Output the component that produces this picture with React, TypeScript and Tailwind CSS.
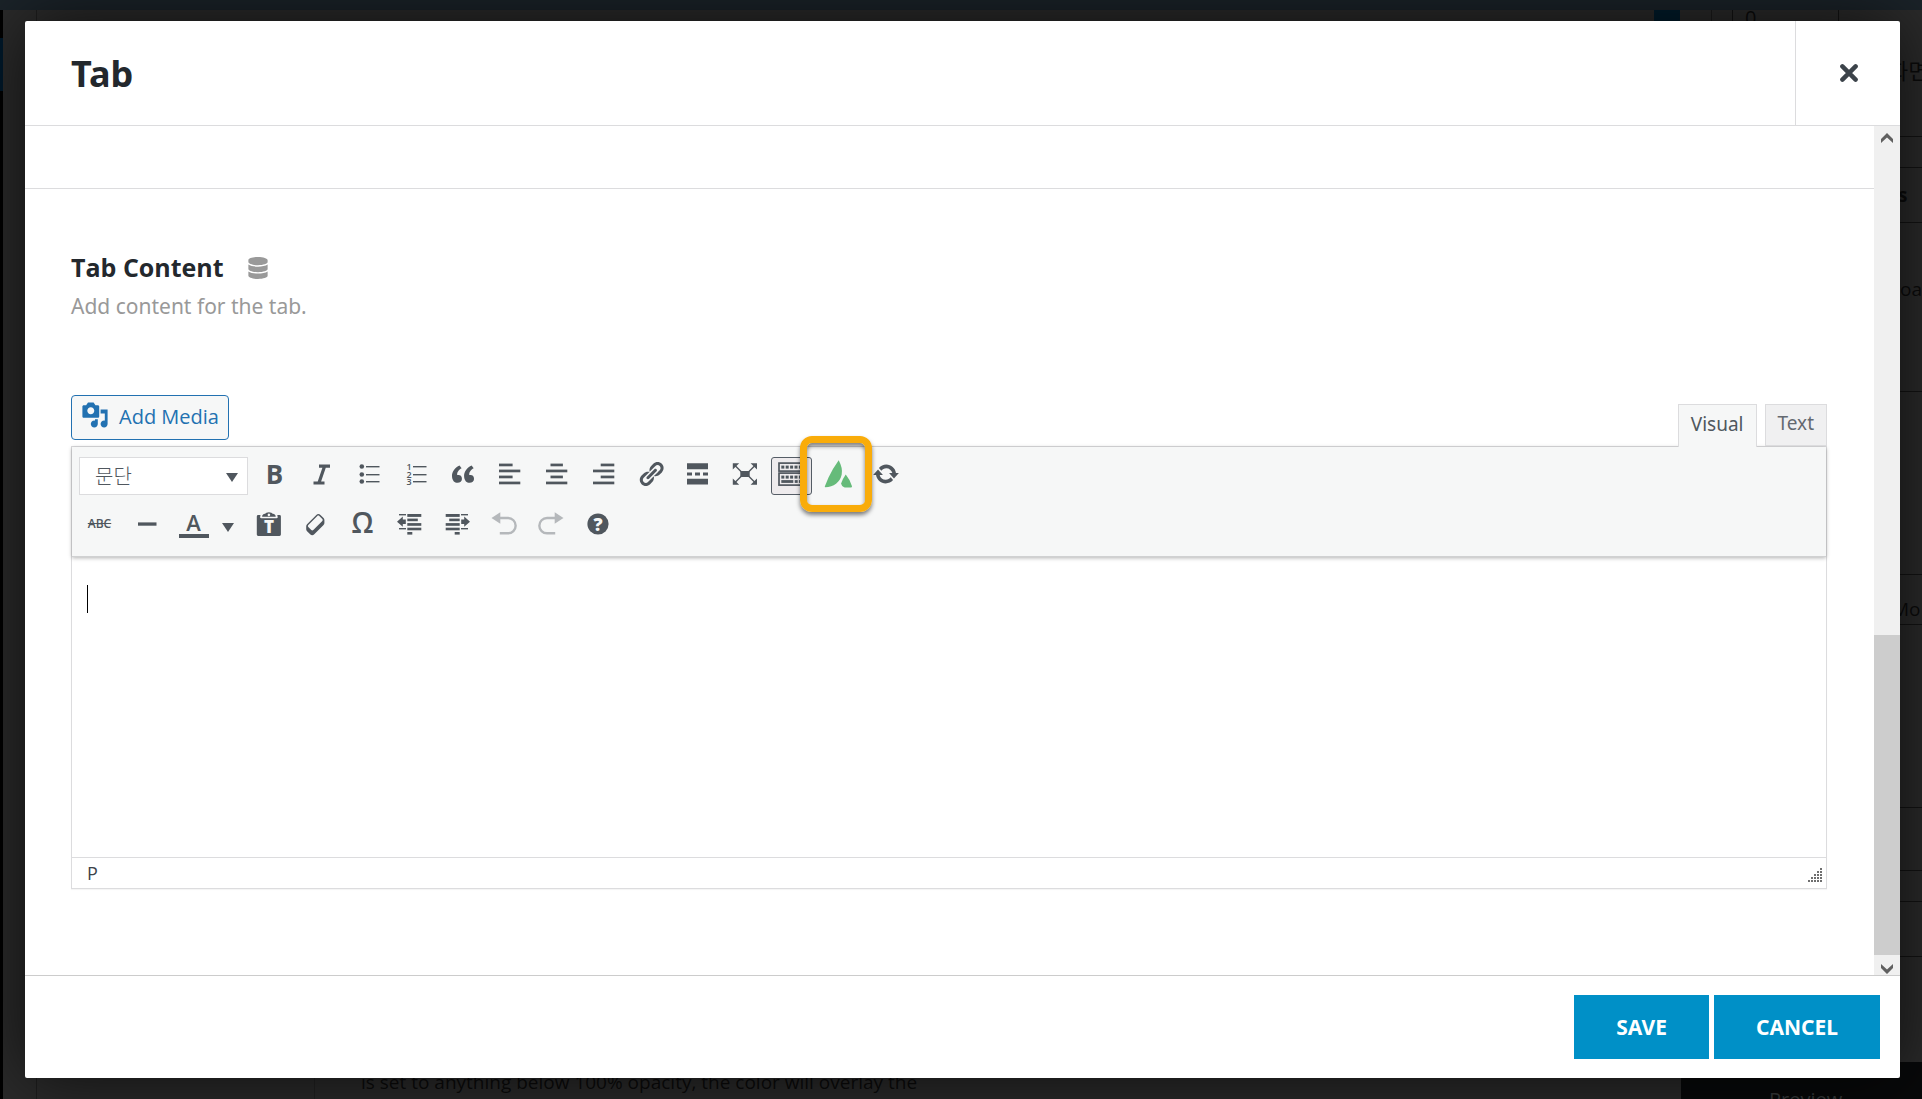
import React from "react";
import { FaDatabase } from "react-icons/fa";

const PATHS = {
  quote:
    "M9.49 13.22c0-.74-.2-1.38-.61-1.9-.62-.78-1.83-.88-2.53-.72-.29-1.65 1.11-3.75 2.92-4.65L7.88 4c-2.73 1.3-5.42 4.28-4.96 8.05C3.21 14.43 4.59 16 6.54 16c.85 0 1.56-.25 2.12-.75s.83-1.18.83-2.03zm8.05 0c0-.74-.2-1.38-.61-1.9-.63-.78-1.83-.88-2.53-.72-.29-1.65 1.11-3.75 2.92-4.65L15.93 4c-2.73 1.3-5.41 4.28-4.95 8.05.29 2.38 1.66 3.95 3.61 3.95.85 0 1.56-.25 2.12-.75s.83-1.18.83-2.03z",
  link: "M17.74 2.76c1.68 1.69 1.68 4.41 0 6.1l-1.53 1.52c-1.12 1.12-2.7 1.47-4.14 1.09l2.62-2.61.76-.77.76-.76c.84-.84.84-2.2 0-3.04-.84-.85-2.2-.85-3.04 0l-.77.76-3.38 3.38c-.37-1.44-.02-3.02 1.1-4.14l1.52-1.53c1.69-1.68 4.42-1.68 6.1 0zM8.59 13.43l5.34-5.34c.42-.42.42-1.1 0-1.52-.44-.43-1.13-.39-1.53 0l-5.33 5.34c-.42.42-.42 1.1 0 1.52.44.43 1.13.39 1.52 0zm-.76 2.29l4.14-4.15c.38 1.44.03 3.02-1.09 4.14l-1.52 1.53c-1.69 1.68-4.41 1.68-6.1 0-1.68-1.68-1.68-4.42 0-6.1l1.53-1.52c1.12-1.12 2.7-1.47 4.14-1.1l-4.14 4.15c-.85.84-.85 2.2 0 3.05.84.84 2.2.84 3.04 0z",
  update:
    "M10.2 3.28c3.53 0 6.43 2.61 6.92 6h2.08l-3.5 4-3.5-4h2.32c-.45-1.97-2.21-3.45-4.32-3.45-1.45 0-2.73.71-3.54 1.78L4.95 5.66C6.23 4.2 8.11 3.28 10.2 3.28zm-.4 13.44c-3.52 0-6.43-2.61-6.92-6H.8l3.5-4c1.17 1.33 2.33 2.67 3.5 4H5.48c.45 1.97 2.21 3.45 4.32 3.45 1.45 0 2.73-.71 3.54-1.78l1.71 1.95c-1.28 1.46-3.15 2.38-5.25 2.38z",
  eraser:
    "M14.29 4.59l1.1 1.11c.41.4.61.94.61 1.47v2.12c0 .53-.2 1.07-.61 1.47l-6.63 6.63c-.4.41-.94.61-1.47.61s-1.07-.2-1.47-.61l-1.11-1.1-1.1-1.11c-.41-.4-.61-.94-.61-1.47v-2.12c0-.54.2-1.07.61-1.48l6.63-6.62c.4-.41.94-.61 1.47-.61s1.06.2 1.47.61zm-6.21 9.7l6.42-6.42c.39-.39.39-1.03 0-1.43L12.36 4.3c-.19-.19-.45-.29-.72-.29s-.52.1-.71.29l-6.42 6.42c-.39.4-.39 1.04 0 1.43l2.14 2.14c.38.38 1.04.38 1.43 0z",
  media:
    "M13 11V4c0-.55-.45-1-1-1h-1.67L9 1H5L3.67 3H2c-.55 0-1 .45-1 1v7c0 .55.45 1 1 1h10c.55 0 1-.45 1-1zM7 4.5c1.38 0 2.5 1.12 2.5 2.5S8.38 9.5 7 9.5 4.5 8.38 4.5 7 5.62 4.5 7 4.5zM14 6h5v10.5c0 1.38-1.12 2.5-2.5 2.5S14 17.88 14 16.5s1.12-2.5 2.5-2.5c.17 0 .34.02.5.05V9h-3V6zm-4 8.05V13h2v3.5c0 1.38-1.12 2.5-2.5 2.5S7 17.88 7 16.5 8.12 14 9.5 14c.17 0 .34.02.5.05z",
};

function Icon({ children }: { children: React.ReactNode }) {
  return (
    <svg viewBox="0 0 28 28" className="size-7 overflow-visible" fill="currentColor" aria-hidden="true">
      {children}
    </svg>
  );
}

/* 20-unit glyph drawn on the 28px icon box */
function Glyph({ d, raise = 2 }: { d: string; raise?: number }) {
  return (
    <Icon>
      <path d={d} transform={`translate(0 ${-raise}) scale(1.4)`} />
    </Icon>
  );
}

function Tool({
  label,
  children,
  active = false,
  disabled = false,
}: {
  label: string;
  children: React.ReactNode;
  active?: boolean;
  disabled?: boolean;
}) {
  return (
    <button
      type="button"
      aria-label={label}
      title={label}
      disabled={disabled}
      className={
        "flex h-[38px] w-[41px] shrink-0 items-center justify-center rounded-[3px] border " +
        (active ? "border-[#555d66] bg-[#eeebed]" : "border-transparent") +
        (disabled ? " text-[#b5b8bb]" : " text-[#50575e]")
      }
    >
      {children}
    </button>
  );
}

function Lines({ rows }: { rows: [number, number][] }) {
  return (
    <Icon>
      {rows.map(([x, w], i) => (
        <rect key={i} x={x} y={1.6 + i * 6} width={w} height={2.7} />
      ))}
    </Icon>
  );
}

const listRows = [4, 12, 19];

const outdentArt = (
  <>
    <rect x="3" y="4" width="7" height="1.4" />
    <rect x="3" y="18" width="7" height="1.4" />
    <rect x="11.3" y="4" width="14" height="2.9" />
    <rect x="11.3" y="8.6" width="10.5" height="2.6" />
    <rect x="11.3" y="13.1" width="14" height="2.7" />
    <rect x="11.3" y="17.7" width="14" height="2.6" />
    <rect x="11.3" y="22" width="5" height="2.6" />
    <path d="M1 11.7 6.8 6.6v2.800h3v4.600h-3v2.800z" />
  </>
);

const undoArt = (
  <>
    <path d="M1.500 8 10.300 2.300v11.400z" />
    <path d="M9.500 8H18a7.600 7.600 0 0 1 0 15.300h-8.200" fill="none" stroke="currentColor" strokeWidth="2.400" />
  </>
);

function Keyboard() {
  return (
    <Icon>
      <rect x="1" y="1.1" width="25" height="8" fill="none" stroke="currentColor" strokeWidth="1.7" />
      <rect x="1" y="11.1" width="25" height="12" fill="none" stroke="currentColor" strokeWidth="1.7" />
      {[0, 1, 2, 3, 4].map((i) => (
        <rect key={i} x={3.3 + i * 4.4} y="3.6" width="3" height="3" />
      ))}
      {[0, 1, 2, 3, 4].map((i) => (
        <rect key={i} x={3.3 + i * 4.4} y="13.6" width="3" height="3" />
      ))}
      <rect x="3.3" y="18.1" width="12" height="2.8" />
      <rect x="16.7" y="18.1" width="3" height="2.8" />
      <rect x="20.9" y="18.1" width="3" height="2.8" />
    </Icon>
  );
}

function Fullscreen() {
  return (
    <Icon>
      <rect x="9.3" y="9" width="9.4" height="6" />
      <path d="M1.8 1.2h6.4L1.8 7.6zM26 1.2h-6.4L26 7.6zM1.8 22.8h6.4l-6.4-6.4zM26 22.8h-6.4l6.4-6.4z" />
      <path d="m4 3.4 8 8m12-8-8 8m-12 9.2 8-8m12 8-8-8" fill="none" stroke="currentColor" strokeWidth="1.4" />
    </Icon>
  );
}

function ToolbarRowOne() {
  return (
    <div className="flex items-center gap-1.5">
      <div className="relative w-[169px]">
        <select
          aria-label="Block format"
          className="block h-[38px] w-full appearance-none border border-[#dcdcde] bg-white pl-[15px] font-['Noto_Sans_CJK_KR',sans-serif] text-[20px] leading-8 font-light text-[#50575e]"
        >
          <option>문단</option>
        </select>
        <svg viewBox="0 0 12 9" className="pointer-events-none absolute top-4 right-2.5 h-[9px] w-3" fill="#50575e" aria-hidden="true">
          <path d="M0 0h12L6 9z" />
        </svg>
      </div>
      <Tool label="Bold">
        <span className="-mt-1 text-[26px] leading-8 font-bold">B</span>
      </Tool>
      <Tool label="Italic">
        <Icon>
          <path d="M11 4.200h11M5.500 21h11M16.600 4.200 10.900 21" fill="none" stroke="currentColor" strokeWidth="3.200" />
        </Icon>
      </Tool>
      <Tool label="Bulleted list">
        <Icon>
          {listRows.map((y) => (
            <g key={y}>
              <circle cx="6.8" cy={y + 0.5} r="2.3" />
              <rect x="11" y={y} width="13.5" height="1.4" />
            </g>
          ))}
        </Icon>
      </Tool>
      <Tool label="Numbered list">
        <Icon>
          {listRows.map((y, i) => (
            <g key={y}>
              <text x="4.4" y={y + 4} fontSize="9" fontWeight="600">
                {i + 1}
              </text>
              <rect x="11" y={y} width="13.5" height="1.4" />
            </g>
          ))}
        </Icon>
      </Tool>
      <Tool label="Blockquote">
        <Icon>
          <path d={PATHS.quote} transform="translate(-1.3 -2.2) scale(1.5 1.44)" />
        </Icon>
      </Tool>
      <Tool label="Align left">
        <Lines rows={[[3, 13.6], [3, 21.3], [3, 13.6], [3, 21.3]]} />
      </Tool>
      <Tool label="Align center">
        <Lines rows={[[7.5, 12.4], [3, 21.3], [7.5, 12.4], [3, 21.3]]} />
      </Tool>
      <Tool label="Align right">
        <Lines rows={[[10.7, 13.6], [3, 21.3], [10.7, 13.6], [3, 21.3]]} />
      </Tool>
      <Tool label="Insert link">
        <Glyph d={PATHS.link} />
      </Tool>
      <Tool label="Insert Read More tag">
        <Icon>
          <path d="M3 1.3h21v6H3zM3 16.7h21v5.8H3zM3 10.4h5v3H3zM11 10.4h5v3h-5zM19 10.4h5v3h-5z" />
        </Icon>
      </Tool>
      <Tool label="Fullscreen">
        <Fullscreen />
      </Tool>
      <Tool label="Toolbar toggle" active>
        <Keyboard />
      </Tool>
      <div className="relative">
        <Tool label="Avada elements">
          <svg viewBox="0 0 28 28" className="size-7 overflow-visible" fill="#66bb7a" aria-hidden="true">
            <path d="M13.700-1.800Q17.900 6 16.700 12.400C15.300 20 8.500 25 .4 25.300Q-.6 25.300-.1 24.200L3.500 15.600Q8 6 13.700-1.800Z" />
            <path d="M20.700 12.500Q25 17.500 27 24.300 27.100 25.400 26.200 25.400H19.700Q16.500 24.500 16.200 21.200 17.700 16.800 20.700 12.500Z" />
          </svg>
        </Tool>
        <span className="pointer-events-none absolute -top-[21px] -left-[18px] z-10 h-[76px] w-[72px] rounded-xl border-7 border-[#f9ac0a] shadow-[0_3px_4px_rgba(0,0,0,0.5),inset_0_3px_4px_rgba(0,0,0,0.5)]" />
      </div>
      <Tool label="Refresh">
        <Glyph d={PATHS.update} />
      </Tool>
    </div>
  );
}

function ToolbarRowTwo() {
  return (
    <div className="flex items-center gap-1.5">
      <Tool label="Strikethrough">
        <span className="text-[12px] leading-4 font-semibold line-through">ABC</span>
      </Tool>
      <Tool label="Horizontal line">
        <Icon>
          <rect x="5" y="12.400" width="18.500" height="3.300" />
        </Icon>
      </Tool>
      <div className="flex">
        <Tool label="Text color">
          <span className="flex w-[30px] flex-col items-center border-b-4 border-[#50575e] text-[22px] leading-6 font-semibold">
            A
          </span>
        </Tool>
        <button type="button" aria-label="Text color options" className="flex h-[38px] w-7 items-center justify-center pt-1.5">
          <svg viewBox="0 0 12 9" className="h-[9px] w-3" fill="#50575e" aria-hidden="true">
            <path d="M0 0h12L6 9z" />
          </svg>
        </button>
      </div>
      <Tool label="Paste as text">
        <Icon>
          <path d="M3.200 5H5.500l-.4 2.200q0 1.100 1.300 1.100H21.500q1.300 0 1.200-1.100L22.300 5h2.200q1.400 0 1.400 1.400v18.200q0 1.400-1.400 1.400H3.200q-1.400 0-1.400-1.400V6.400Q1.800 5 3.200 5Z" />
          <path fillRule="evenodd" d="M7.100 6.700q0-2.600 3-2.900Q10.800 2.200 13.900 2.200t3.800 1.600q3 .3 3 2.900ZM13.900 3.600a1.300 1.300 0 1 0 .010 0Z" />
          <text x="13.900" y="23.300" fontSize="17" fontWeight="800" textAnchor="middle" fill="#f6f7f7">
            T
          </text>
        </Icon>
      </Tool>
      <Tool label="Clear formatting">
        <Glyph d={PATHS.eraser} raise={0} />
      </Tool>
      <Tool label="Special character">
        <span className="-mt-1 text-[28px] leading-8 font-semibold">Ω</span>
      </Tool>
      <Tool label="Decrease indent">
        <Icon>{outdentArt}</Icon>
      </Tool>
      <Tool label="Increase indent">
        <Icon>
          <g transform="translate(28 0) scale(-1 1)">{outdentArt}</g>
        </Icon>
      </Tool>
      <Tool label="Undo" disabled>
        <Icon>{undoArt}</Icon>
      </Tool>
      <Tool label="Redo" disabled>
        <Icon>
          <g transform="translate(28 0) scale(-1 1)">{undoArt}</g>
        </Icon>
      </Tool>
      <Tool label="Keyboard shortcuts">
        <Icon>
          <circle cx="14" cy="14" r="10.600" />
          <text x="14" y="20.500" fontSize="18" fontWeight="800" textAnchor="middle" fill="#f6f7f7">
            ?
          </text>
        </Icon>
      </Tool>
    </div>
  );
}

function Editor() {
  return (
    <div>
      <div className="flex items-start justify-between">
        <button
          type="button"
          className="flex h-[45px] items-center gap-2.5 rounded-[4px] border border-[#2271b1] bg-[#f6f7f7] px-[9px] text-[20px] text-[#2271b1]"
        >
          <svg viewBox="0 0 20 20" className="-mt-1.5 size-7" fill="currentColor" aria-hidden="true">
            <path d={PATHS.media} />
          </svg>
          <span className="-mt-0.5">Add Media</span>
        </button>
        <div role="tablist" className="mt-[9px] flex gap-2 text-[20px] leading-7">
          <button
            type="button"
            role="tab"
            aria-selected="true"
            className="relative z-10 -mb-px h-[43px] border border-b-0 border-[#dcdcde] bg-[#f6f7f7] px-3 pb-1 font-['Noto_Sans'] text-[19px] text-[#50575e]"
          >
            Visual
          </button>
          <button
            type="button"
            role="tab"
            aria-selected="false"
            className="h-[42px] border border-[#dcdcde] bg-[#f0f0f1] px-3 pb-1 font-['Noto_Sans'] text-[19px] text-[#646970]"
          >
            Text
          </button>
        </div>
      </div>
      <div className="border border-[#dcdcde] shadow-[0_1px_1px_rgba(0,0,0,0.04)]">
        <div
          role="toolbar"
          className="flex flex-col gap-2.5 border-b border-[#d0d1d2] bg-[#f6f7f7] px-[7px] pt-2.5 pb-[13px] shadow-[0_1px_4px_rgba(0,0,0,0.3)]"
        >
          <ToolbarRowOne />
          <ToolbarRowTwo />
        </div>
        <div className="relative h-[300px]">
          <textarea aria-label="Tab content" className="block h-full w-full resize-none px-[15px] py-7 text-[20px] outline-none" />
          <span className="pointer-events-none absolute top-7 left-[15px] h-7 w-px bg-black" />
        </div>
        <div className="flex h-[31px] items-center justify-between border-t border-[#dcdcde] pr-1 pl-[15px] text-[18px] leading-6 text-[#3c434a]">
          <span>P</span>
          <svg viewBox="0 0 14 14" className="mt-1 size-3.5" fill="#6f6f6f" aria-hidden="true">
            {[0, 1, 2, 3, 4].map((r) =>
              Array.from({ length: r + 1 }, (_, c) => <rect key={`${r}-${c}`} x={12 - c * 3} y={r * 3} width="2" height="2" />),
            )}
          </svg>
        </div>
      </div>
    </div>
  );
}

function ScrollArrow({ down = false }: { down?: boolean }) {
  return (
    <svg viewBox="0 0 12 10" className={down ? "h-2.5 w-3 rotate-180" : "h-2.5 w-3"} fill="#606060" aria-hidden="true">
      <path d="M6 0 12 6v4L6 4.500 0 10V6z" />
    </svg>
  );
}

function Backdrop() {
  const line = "shrink-0 border-b border-[#131313] whitespace-nowrap flex items-center";
  return (
    <div aria-hidden="true" className="absolute inset-0 flex flex-col bg-[#2b2b2b] text-[#0b0b0b]">
      <div className="h-2.5 shrink-0 bg-[#1b2329]" />
      <div className="flex min-h-0 flex-1">
        <div className="w-[3px] bg-black pt-7">
          <div className="h-[53px] bg-[#00192b]" />
        </div>
        <div className="flex min-w-0 flex-1 flex-col justify-between pl-[33px]">
          <div className="flex h-8 justify-end border-l border-[#1e1e1e]">
            <div className="w-[26px] bg-[#011c2c]" />
            <div className="w-8 border-r border-[#1b1b1b]" />
            <div className="w-[21px] border-r border-[#131313]" />
            <div className="w-[106px] border-r border-[#131313] pl-3 text-[20px] leading-4">0</div>
            <div className="w-[61px]" />
          </div>
          <div className="flex h-[37px] items-stretch border-l border-[#1e1e1e]">
            <div className="w-[278px] border-r border-[#222]" />
            <div className="flex-1 overflow-hidden pl-[46px] text-[19px] leading-10 whitespace-nowrap">
              is set to anything below 100% opacity, the color will overlay the
            </div>
            <div className="w-[219px] bg-[#08090a] pt-6 pl-[88px] text-[20px] leading-7 text-[#37393a]">Preview</div>
          </div>
        </div>
        <div className="flex w-[22px] flex-col text-[19px]">
          <div className={line + " h-[127px] pb-2 font-['Noto_Sans_CJK_KR',sans-serif] text-[22px]"}>
            <span className="-ml-3">화면</span>
          </div>
          <div className={line + " h-[31px]"} />
          <div className={line + " h-[55px] font-bold"}>
            <span className="-ml-0.5">s</span>
          </div>
          <div className={line + " h-[169px] pb-9"}>oa</div>
          <div className={line + " h-[183px]"} />
          <div className={line + " h-[50px] pt-5"}>
            <span className="-ml-2">Mo</span>
          </div>
          <div className={line + " h-[183px]"} />
          <div className={line + " h-[63px]"} />
          <div className={line + " h-[31px]"} />
          <div className={line + " h-[55px]"} />
          <div className="h-[105px] shrink-0" />
          <div className="flex-1 bg-[#08090a]" />
        </div>
      </div>
    </div>
  );
}

export default function App() {
  return (
    <div className="relative h-screen overflow-hidden font-['Open_Sans','Noto_Sans_CJK_KR',sans-serif]">
      <Backdrop />
      <div className="relative flex h-full pt-[21px] pr-[22px] pb-[21px] pl-[25px]">
        <div
          role="dialog"
          aria-labelledby="dialog-title"
          className="flex min-w-0 flex-1 flex-col rounded-[2px] bg-white shadow-[0_0_70px_rgba(0,0,0,0.7)]"
        >
          <header className="flex h-[105px] shrink-0 justify-between border-b border-[#dcdcde] pl-[46px]">
            <h2 id="dialog-title" className="font-['Noto_Sans'] text-[36px] leading-[106px] font-bold text-[#23282d]">
              Tab
            </h2>
            <button type="button" aria-label="Close" className="flex w-[105px] items-center justify-center border-l border-[#dcdcde] pl-0.5">
              <svg viewBox="0 0 18 18" className="size-[18px]" fill="none" stroke="#3c434a" strokeWidth="4.500" strokeLinecap="round" aria-hidden="true">
                <path d="m2.400 2.400 13.200 13.200m0-13.200L2.400 15.600" />
              </svg>
            </button>
          </header>

          <div className="flex min-h-0 flex-1">
            <div className="min-w-0 flex-1 overflow-hidden">
              <div className="h-[63px] border-b border-[#dcdcde]" />
              <section className="pt-[60px] pr-[47px] pl-[46px]">
                <div className="flex items-center gap-[23px]">
                  <h3 className="text-[25px] leading-9 font-bold text-[#23282d]">Tab Content</h3>
                  <button type="button" aria-label="Dynamic content" className="pt-0.5 text-[#999]">
                    <FaDatabase className="size-[22px]" />
                  </button>
                </div>
                <p className="mt-[5px] mb-[73px] font-['Noto_Sans'] text-[21px] leading-8 text-[#999]">Add content for the tab.</p>
                <Editor />
              </section>
            </div>
            <div className="flex w-[26px] shrink-0 flex-col items-center bg-[#f0f0f0] pt-[7px] pb-px">
              <ScrollArrow />
              <div className="mt-auto mb-[9px] h-80 w-full bg-[#cdcdcd]" />
              <ScrollArrow down />
            </div>
          </div>

          <footer className="flex shrink-0 justify-end gap-[5px] border-t border-[#ccc] px-5 py-[19px]">
            <button type="button" className="h-16 bg-[#0090c7] px-[42px] pt-0.5 font-['Noto_Sans'] text-[21px] font-bold text-white">
              SAVE
            </button>
            <button type="button" className="h-16 bg-[#0090c7] px-[42px] pt-0.5 font-['Noto_Sans'] text-[21px] font-bold text-white">
              CANCEL
            </button>
          </footer>
        </div>
      </div>
    </div>
  );
}
